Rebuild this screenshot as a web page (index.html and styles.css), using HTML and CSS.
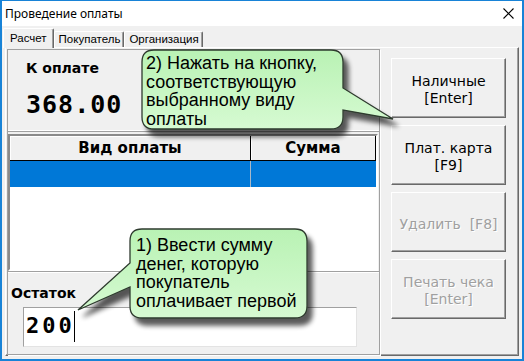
FILE: index.html
```html
<!DOCTYPE html>
<html>
<head>
<meta charset="utf-8">
<link rel="stylesheet" href="styles.css">
</head>
<body>
<div class="window">
  <div class="titlebar">
    <span class="title">Проведение оплаты</span>
    <svg class="close" width="11" height="11" viewBox="0 0 11 11"><path d="M0.5 0.5L10.5 10.5M10.5 0.5L0.5 10.5" stroke="#000" stroke-width="1.1" fill="none"/></svg>
  </div>
  <div class="client">
    <div class="tabs">
      <div class="tab active">Расчет</div>
      <div class="tab">Покупатель</div>
      <div class="tab">Организация</div>
    </div>
    <div class="page">
      <div class="left">
        <div class="due">
          <div class="label">К оплате</div>
          <div class="amount">368.00</div>
        </div>
        <div class="grid">
          <div class="grid-head">
            <div class="hc c1">Вид оплаты</div>
            <div class="hc c2">Сумма</div>
          </div>
          <div class="grid-row">
            <div class="rc c1"></div>
            <div class="rc c2"></div>
          </div>
        </div>
        <div class="rest">
          <div class="label rest-label">Остаток</div>
          <div class="input"><span class="val">200</span><span class="caret"></span></div>
        </div>
      </div>
      <div class="buttons">
        <div class="btn">Наличные<br>[Enter]</div>
        <div class="btn">Плат. карта<br>[F9]</div>
        <div class="btn disabled">Удалить  [F8]</div>
        <div class="btn disabled">Печать чека<br>[Enter]</div>
      </div>
    </div>
  </div>

  <div class="callout callout-2">
    <svg class="balloon" width="290" height="104" viewBox="0 0 290 104">
      <defs>
        <linearGradient id="g2" x1="0" y1="0" x2="0" y2="1">
          <stop offset="0" stop-color="#b9f2b4"/>
          <stop offset="1" stop-color="#d6fad2"/>
        </linearGradient>
        <filter id="sh2" x="-10%" y="-10%" width="130%" height="140%">
          <feGaussianBlur in="SourceAlpha" stdDeviation="2.5"/>
          <feOffset dx="5" dy="7" result="b"/>
          <feComponentTransfer><feFuncA type="linear" slope="0.65"/></feComponentTransfer>
          <feMerge><feMergeNode/><feMergeNode in="SourceGraphic"/></feMerge>
        </filter>
      </defs>
      <path filter="url(#sh2)" fill="url(#g2)" stroke="#2e3a2e" stroke-width="1.3"
        d="M24 5 H201 Q213 5 213 17 V43 L263 74 L213 65 V72 Q213 84 201 84 H24 Q12 84 12 72 V17 Q12 5 24 5 Z"/>
    </svg>
    <div class="callout-text t2">2) Нажать на кнопку,<br>соответствующую<br>выбранному виду<br>оплаты</div>
  </div>

  <div class="callout callout-1">
    <svg class="balloon" width="260" height="114" viewBox="0 0 260 114">
      <defs>
        <linearGradient id="g1" x1="0" y1="0" x2="0" y2="1">
          <stop offset="0" stop-color="#b9f2b4"/>
          <stop offset="1" stop-color="#d6fad2"/>
        </linearGradient>
        <filter id="sh1" x="-10%" y="-10%" width="130%" height="140%">
          <feGaussianBlur in="SourceAlpha" stdDeviation="2.5"/>
          <feOffset dx="5" dy="7" result="b"/>
          <feComponentTransfer><feFuncA type="linear" slope="0.65"/></feComponentTransfer>
          <feMerge><feMergeNode/><feMergeNode in="SourceGraphic"/></feMerge>
        </filter>
      </defs>
      <path filter="url(#sh1)" fill="url(#g1)" stroke="#2e3a2e" stroke-width="1.3"
        d="M72 7 H225 Q237 7 237 19 V84 Q237 96 225 96 H72 Q60 96 60 84 V65 L8 88 L60 41 V19 Q60 7 72 7 Z"/>
    </svg>
    <div class="callout-text t1">1) Ввести сумму<br>денег, которую<br>покупатель<br>оплачивает первой</div>
  </div>
</div>
</body>
</html>
```

FILE: styles.css
```css
* { box-sizing: border-box; }
html, body { margin: 0; padding: 0; }
body { width: 524px; height: 361px; overflow: hidden; background: #fff; }

.window {
  position: relative;
  width: 524px;
  height: 361px;
  border: 2px solid #1883d7;
  border-top-width: 1px;
  background: #f0f0f0;
  display: flex;
  flex-direction: column;
  font-family: "Liberation Sans", Arial, sans-serif;
  color: #000;
}

.titlebar {
  flex: none;
  height: 25px;
  background: #fff;
  display: flex;
  align-items: center;
  justify-content: space-between;
  padding: 0 8px 0 3px;
}
.title { font-family: "Noto Sans", "Liberation Sans", sans-serif; font-size: 12px; }
.close { display: block; }

.client {
  flex: 1;
  display: flex;
  flex-direction: column;
  padding: 0 3px 3px 3px;
}

.tabs {
  flex: none;
  height: 21px;
  display: flex;
  align-items: flex-end;
  margin-left: -2px;
  position: relative;
  z-index: 2;
}
.tab {
  height: 16px;
  padding: 0 3px 0 4px;
  font-size: 11.5px;
  line-height: 15px;
  background: #f0f0f0;
  border-top: 1px solid #fff;
  border-left: 1px solid #fff;
  border-right: 1px solid #696969;
  box-shadow: inset -1px 0 0 #a0a0a0;
  border-radius: 2px 2px 0 0;
}
.tab.active {
  height: 20px;
  margin-bottom: -1px;
  padding: 1px 6px 0 6px;
  line-height: 16px;
}

.page {
  flex: 1;
  display: flex;
  align-items: flex-start;
  padding: 1px 0 0 1px;
  border-top: 1px solid #fff;
  border-left: 1px solid #fff;
  border-right: 1px solid #696969;
  border-bottom: 1px solid #696969;
  box-shadow: inset -1px -1px 0 #a0a0a0;
}

.left {
  width: 373px;
  height: 306px;
  border: 1px solid #a0a0a0;
  box-shadow: 1px 1px 0 #fff;
  display: flex;
  flex-direction: column;
}

.label {
  font-family: "DejaVu Sans", sans-serif;
  font-weight: bold;
  font-size: 14px;
  line-height: 16px;
}

.due {
  flex: none;
  height: 82px;
  padding: 10px 0 0 18px;
  border-bottom: 1px solid #a0a0a0;
  box-shadow: inset 0 -1px 0 #fff;
}
.amount {
  margin-top: 15px;
  font-family: "DejaVu Sans Mono", monospace;
  font-weight: bold;
  font-size: 25px;
  line-height: 28px;
  letter-spacing: 1px;
}

.grid {
  flex: none;
  width: 370px;
  height: 137px;
  margin-top: 2px;
  background: #fff;
  border: 2px solid;
  border-color: #8a8a8a #fff #fff #8a8a8a;
}
.grid-head {
  display: flex;
  height: 25px;
  background: #f0f0f0;
  border-bottom: 1px solid #000;
}
.hc {
  display: flex;
  align-items: center;
  justify-content: center;
  font-family: "DejaVu Sans", sans-serif;
  font-weight: bold;
  font-size: 15px;
  box-shadow: inset 1px 1px 0 #fff;
  border-right: 1px solid #000;
}
.c1 { width: 241px; flex: none; }
.c2 { flex: 1; }
.grid-row {
  display: flex;
  height: 26px;
  background: #0078d7;
}
.rc.c1 { border-right: 1px solid #a8b8c8; }
.rc.c2 { margin-right: 1px; }

.rest {
  flex: 1;
  padding: 13px 0 0 3px;
  border-top: 1px solid #a0a0a0;
  box-shadow: inset 0 1px 0 #fff;
}
.input {
  margin: 6px 0 0 12px;
  width: 334px;
  height: 40px;
  background: #fff;
  border: 1px solid;
  border-color: #a0a0a0 #e3e3e3 #e3e3e3 #a0a0a0;
  display: flex;
  align-items: center;
  padding: 0 0 2px 2px;
}
.val {
  font-family: "DejaVu Sans Mono", monospace;
  font-weight: bold;
  font-size: 22px;
  line-height: 26px;
  letter-spacing: 3px;
}
.caret {
  width: 1px;
  height: 31px;
  background: #000;
  margin-left: -1px;
}

.buttons {
  display: flex;
  flex-direction: column;
  gap: 7px;
  margin: 9px 0 0 11px;
}
.btn {
  width: 115px;
  height: 60px;
  display: flex;
  align-items: center;
  justify-content: center;
  text-align: center;
  white-space: pre;
  padding-top: 4px;
  font-family: "DejaVu Sans", sans-serif;
  font-size: 14px;
  line-height: 17px;
  background: #f0f0f0;
  border-top: 1px solid #fff;
  border-left: 1px solid #fff;
  border-right: 1px solid #696969;
  border-bottom: 1px solid #696969;
  box-shadow: inset -1px -1px 0 #a0a0a0;
}
.btn.disabled {
  color: #a0a0a0;
  text-shadow: 1px 1px 0 #fff;
}

.callout { position: absolute; z-index: 5; }
.callout-2 { left: 128px; top: 44px; width: 290px; height: 104px; }
.callout-1 { left: 68px; top: 221px; width: 260px; height: 114px; }
.balloon { position: absolute; left: 0; top: 0; display: block; }
.callout-text {
  position: absolute;
  font-family: "Liberation Sans", Arial, sans-serif;
  font-size: 18px;
  line-height: 18.5px;
  color: #000;
  white-space: nowrap;
}
.t2 { left: 16px; top: 9px; }
.t1 { left: 66px; top: 14px; }
```
